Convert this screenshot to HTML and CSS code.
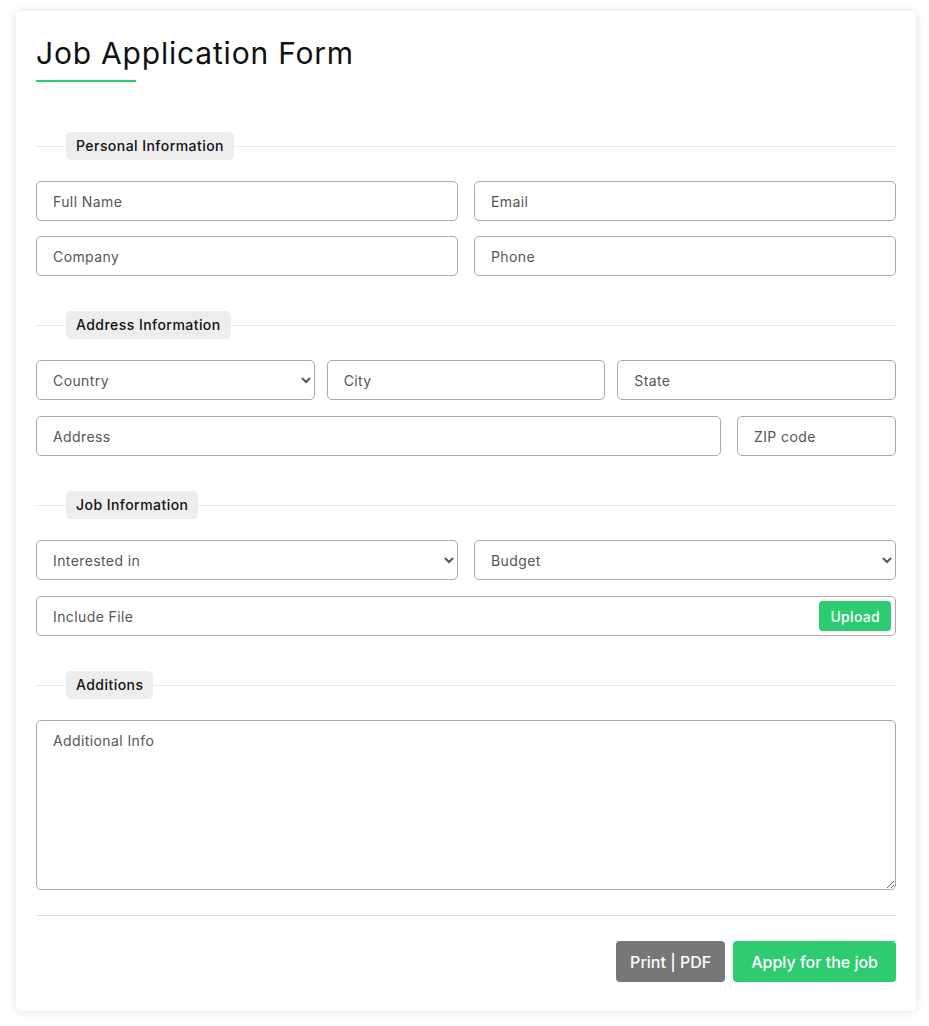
FILE: index.html
```html
<!DOCTYPE html>
<html lang="en">
<head>
<meta charset="utf-8">
<title>Job Application Form</title>
<link rel="stylesheet" href="styles.css">
</head>
<body>
<form class="card">
  <h1 class="title">Job Application Form</h1>

  <div class="section section-first">
    <div class="section-head"><span class="section-label">Personal Information</span></div>
    <div class="row cols-2">
      <input class="field" type="text" placeholder="Full Name">
      <input class="field" type="email" placeholder="Email">
    </div>
    <div class="row cols-2">
      <input class="field" type="text" placeholder="Company">
      <input class="field" type="text" placeholder="Phone">
    </div>
  </div>

  <div class="section">
    <div class="section-head"><span class="section-label">Address Information</span></div>
    <div class="row cols-3">
      <select class="field select"><option>Country</option></select>
      <input class="field" type="text" placeholder="City">
      <input class="field" type="text" placeholder="State">
    </div>
    <div class="row cols-addr">
      <input class="field" type="text" placeholder="Address">
      <input class="field" type="text" placeholder="ZIP code">
    </div>
  </div>

  <div class="section">
    <div class="section-head"><span class="section-label">Job Information</span></div>
    <div class="row cols-2">
      <select class="field select"><option>Interested in</option></select>
      <select class="field select"><option>Budget</option></select>
    </div>
    <div class="row">
      <div class="file-field">
        <span class="file-text">Include File</span>
        <button type="button" class="upload">Upload</button>
      </div>
    </div>
  </div>

  <div class="section">
    <div class="section-head"><span class="section-label">Additions</span></div>
    <textarea class="field textarea" placeholder="Additional Info"></textarea>
  </div>

  <div class="actions">
    <button type="button" class="btn btn-gray">Print | PDF</button>
    <button type="submit" class="btn btn-green">Apply for the job</button>
  </div>
</form>
</body>
</html>
```

FILE: styles.css
```css
* { box-sizing: border-box; }

body {
  margin: 0;
  padding: 11px 0 14px 16px;
  background: #fff;
  font-family: Inter, "Open Sans", "Liberation Sans", sans-serif;
  color: #222;
}

.card {
  width: 900px;
  padding: 20px 20px 29px;
  background: #fff;
  border-radius: 5px;
  box-shadow: 0 0 10px rgba(0, 0, 0, 0.12);
}

.title {
  margin: 0;
  font-size: 30px;
  font-weight: 400;
  line-height: 44px;
  letter-spacing: 0.8px;
  color: #111;
}

.title::after {
  content: "";
  display: block;
  width: 100px;
  height: 2px;
  margin-top: 5px;
  background: #2ecc71;
}

.section {
  margin-top: 35px;
  display: flex;
  flex-direction: column;
  gap: 16px;
}

.section-first {
  margin-top: 50px;
  gap: 15px;
}

.section-head {
  height: 28px;
  margin-bottom: 5px;
  background: linear-gradient(#eaeaea, #eaeaea) left 14px / 100% 1px no-repeat;
}

.section-first .section-head { margin-bottom: 6px; }

.section-label {
  display: inline-block;
  margin-left: 30px;
  height: 28px;
  line-height: 28px;
  padding: 0 10px;
  font-size: 14px;
  font-weight: 500;
  letter-spacing: 0.45px;
  color: #111;
  background: #ededed;
  border-radius: 5px;
}

.row {
  display: grid;
  gap: 16px;
}

.cols-2 { grid-template-columns: 1fr 1fr; }
.cols-3 { grid-template-columns: 1fr 1fr 1fr; gap: 12px; }
.cols-addr { grid-template-columns: 1fr 159px; }

.field {
  width: 100%;
  height: 40px;
  padding: 0 16px;
  border: 1px solid #a9a9a9;
  border-radius: 5px;
  background: #fff;
  font-family: inherit;
  font-size: 14px;
  letter-spacing: 0.4px;
  color: #444;
  outline: none;
}

.field::placeholder { color: #555; opacity: 1; }

.select {
  padding: 0 6px 0 12px;
  color: #555;
}

.file-field {
  display: flex;
  align-items: center;
  justify-content: space-between;
  height: 40px;
  padding: 0 4px 0 16px;
  border: 1px solid #a9a9a9;
  border-radius: 5px;
  font-size: 14px;
  letter-spacing: 0.4px;
  color: #555;
}

.upload {
  height: 30px;
  padding: 0 11px;
  border: 0;
  border-radius: 4px;
  background: #2ecc71;
  color: #fff;
  font-family: inherit;
  font-size: 14px;
  font-weight: 500;
  letter-spacing: 0.3px;
}

.textarea {
  display: block;
  height: 170px;
  padding: 10px 16px;
  resize: vertical;
  line-height: 20px;
}

.actions {
  margin-top: 25px;
  padding-top: 25px;
  border-top: 1px solid #ddd;
  display: flex;
  justify-content: flex-end;
  gap: 8px;
}

.btn {
  height: 41px;
  padding: 0 16px;
  border: 0;
  border-radius: 4px;
  color: #fff;
  font-family: inherit;
  font-size: 16px;
  font-weight: 500;
}

.btn-gray { background: #777; padding: 0 14px; }
.btn-green { background: #2ecc71; padding: 0 18px; }
```
